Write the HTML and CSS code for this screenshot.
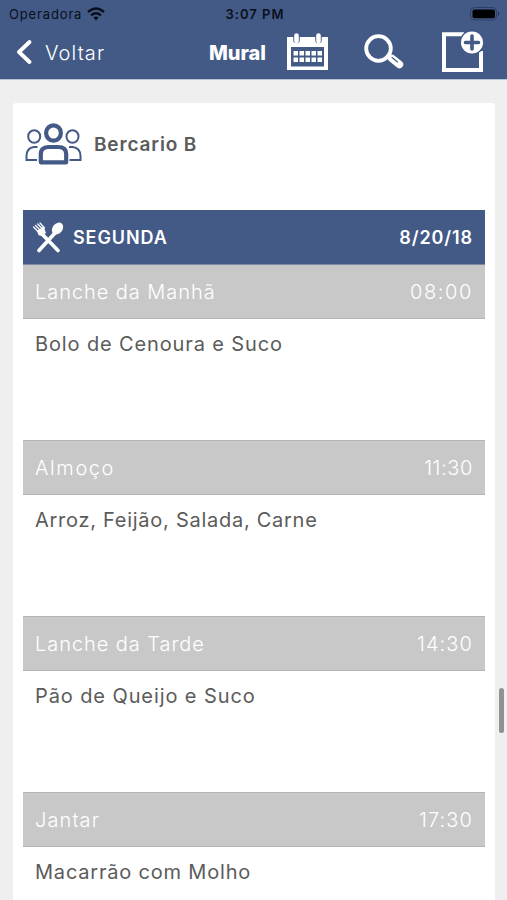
FILE: index.html
```html
<!DOCTYPE html>
<html lang="pt">
<head>
<meta charset="utf-8">
<meta name="viewport" content="width=device-width">
<title>Mural</title>
<link rel="stylesheet" href="styles.css">
</head>
<body>
<header class="top">
  <div class="status">
    <div class="carrier"><span class="operator">Operadora</span>
      <svg width="18" height="14" viewBox="0 0 18 14" fill="none" stroke="#0a0f1c" stroke-width="2.4"><path d="M1 5Q9-2 17 5M4 8.300Q9 4 14 8.300"/><path d="M6.300 10.600Q9 8.300 11.700 10.600L9 13.500Z" fill="#0a0f1c" stroke="none"/></svg>
    </div>
    <span class="clock">3:07 PM</span>
    <svg class="battery" width="31" height="14" viewBox="0 0 31 14"><rect x=".5" y=".5" width="26" height="12.500" rx="4" fill="none" stroke="#2c3e66"/><rect x="2.500" y="2.500" width="22.500" height="8.700" rx="2" fill="#000"/><path d="M28 4.500q2.500 2.200 0 4.500z" fill="#25365c"/></svg>
  </div>
  <nav class="bar">
    <div class="back">
      <svg width="16" height="24" viewBox="0 0 16 24" fill="none" stroke="#fff" stroke-width="3.800" stroke-linecap="round" stroke-linejoin="round"><path d="M13.500 2L3 12L13.500 22"/></svg>
      <span class="back-label">Voltar</span>
    </div>
    <h1 class="title">Mural</h1>
    <div class="actions">
      <svg width="42" height="38" viewBox="0 0 42 38"><path fill="#fff" fill-rule="evenodd" d="M0 4H41V37H0ZM4 14V33.500H37V14Z"/><path d="M9.500 2V7M31.500 2V7" stroke="#435a87" stroke-width="6.500" stroke-linecap="round"/><path d="M9.500 2.500V8M31.500 2.500V8" stroke="#fff" stroke-width="4.600" stroke-linecap="round"/><path fill="#fff" d="M6.500 18h4.500v4.500H6.500zM12.500 18H17v4.500H12.500zM18.500 18H23v4.500H18.500zM24.500 18H29v4.500H24.500zM30.500 18H35v4.500H30.500zM6.500 24.500h4.500V29H6.500zM12.500 24.500H17V29H12.500zM18.500 24.500H23V29H18.500zM24.500 24.500H29V29H24.500zM30.500 24.500H35V29H30.500z"/></svg>
      <svg class="search" width="41" height="36" viewBox="0 0 41 36" fill="none" stroke="#fff" stroke-linecap="round"><circle cx="14.500" cy="14.500" r="12.300" stroke-width="3.800"/><path d="M23.500 22.500L27 25" stroke-width="4"/><path d="M28 24.500L35.500 30.500" stroke-width="7.500"/><path d="M28 23.500L33.500 28" stroke="#435a87" stroke-width="1.100"/></svg>
      <svg class="add" width="42" height="42" viewBox="0 0 42 42"><path d="M22 3.200H2V39H39V20" fill="none" stroke="#fff" stroke-width="4"/><circle cx="30" cy="11.500" r="12.500" fill="#435a87"/><circle cx="30" cy="11.500" r="11" fill="#fff"/><path d="M30 5V18M23.500 11.500H36.500" stroke="#435a87" stroke-width="3.600" stroke-linecap="round"/></svg>
    </div>
  </nav>
</header>
<main class="card">
  <div class="group">
    <svg width="58" height="42" viewBox="0 0 58 42" fill="none" stroke="#435a87"><g stroke-width="2"><ellipse cx="9.200" cy="13.500" rx="6" ry="6.300"/><ellipse cx="47.500" cy="13.500" rx="6" ry="6.300"/><path d="M12.500 24H9Q1.500 25 1.500 33V37H12M44 24H47.500Q55.500 25 55.500 33V37H44.500"/></g><g stroke-width="4.200"><ellipse cx="28.500" cy="10" rx="7.400" ry="7.700"/><path d="M15.800 39.300V31Q15.800 24 24 24H33Q41.200 24 41.200 31V39.300Z" stroke-linejoin="round"/></g></svg>
    <span class="group-name">Bercario B</span>
  </div>
  <section class="menu">
    <div class="day">
      <svg width="32" height="32" viewBox="0 0 32 32" fill="none" stroke="#fff" stroke-linecap="round"><path d="M10 12L26 28.500M23 11L7 28.500" stroke-width="3.700"/><ellipse cx="25.500" cy="6.500" rx="4.900" ry="6.600" transform="rotate(40 25.500 6.500)" fill="#fff" stroke="none"/><path d="M1.500 5L6.500 10M3.500 3.500L8.500 8.500M5.700 2L10.500 7M8 1L12.500 6" stroke-width="1.250"/><path d="M5 9L11.500 4.500L14 11Q10 15 6.500 13Z" fill="#fff" stroke="none"/></svg>
      <span class="day-name">SEGUNDA</span><span class="date">8/20/18</span>
    </div>
    <div class="meal"><span class="m1">Lanche da Manhã</span><span class="t1">08:00</span></div>
    <p class="food f1">Bolo de Cenoura e Suco</p>
    <div class="meal"><span class="m2">Almoço</span><span class="t2">11:30</span></div>
    <p class="food f2">Arroz, Feijão, Salada, Carne</p>
    <div class="meal"><span class="m3">Lanche da Tarde</span><span class="t3">14:30</span></div>
    <p class="food f3">Pão de Queijo e Suco</p>
    <div class="meal"><span class="m4">Jantar</span><span class="t4">17:30</span></div>
    <p class="food f4">Macarrão com Molho</p>
  </section>
</main>
<div class="scroll-thumb"></div>
</body>
</html>
```
FILE: styles.css
```css
* { box-sizing: border-box; }
body { margin: 0; height: 900px; overflow: hidden; background: #efefef; font-family: Inter, "Liberation Sans", sans-serif; color: #5b5b5b; }
svg { display: block; flex: none; }
.top { height: 80px; background: #435a87; border-bottom: 1px solid #b5c3d8; }
.status { display: grid; grid-template-columns: 1fr auto 1fr; height: 27px; padding: 0 6px 0 9px; align-items: center; font-size: 13px; color: #0a0f1c; }
.carrier { display: flex; gap: 5px; align-items: center; }
.operator { letter-spacing: .85px; }
.clock { font-weight: 600; letter-spacing: 1px; }
.battery { justify-self: end; }
.bar { display: flex; height: 50px; align-items: center; color: #fff; }
.back { display: flex; align-items: center; gap: 13px; width: 193px; padding-left: 16px; }
.back-label { padding-top: 1px; font-size: 20px; font-weight: 300; letter-spacing: 1.1px; }
.title { width: 78px; margin: 0; padding: 1px 0 0 16px; font-size: 20px; font-weight: 800; white-space: nowrap; }
.actions { display: flex; align-items: center; margin-left: 16px; }
.search { margin-left: 35px; }
.add { margin-left: 37px; }
.card { width: 482px; height: 797px; margin: 23px 0 0 13px; padding: 0 10px; background: #fff; border-radius: 3px 3px 0 0; }
.group { display: flex; align-items: center; gap: 11px; height: 82px; padding-left: 2px; }
.group-name { font-size: 19px; font-weight: 600; letter-spacing: .85px; }
.menu { margin-top: 25px; }
.day { display: flex; align-items: center; height: 55px; padding: 1px 12px 0 9px; background: #435a87; color: #fff; font-size: 18px; font-weight: 600; letter-spacing: .9px; border-bottom: 1px solid #7c899e; }
.day-name { margin-left: 9px; }
.date { margin-left: auto; }
.meal { display: flex; align-items: center; justify-content: space-between; height: 55px; padding: 0 12px; background: #c8c8c8; border: solid #b1b5b8; border-width: 1px 0; color: #fff; font-size: 20px; font-weight: 300; }
.day + .meal { height: 54px; border-top: 0; }
.food { margin: 0; height: 121px; padding: 12px 12px 0; font-size: 20px; line-height: 26px; white-space: nowrap; }
.food:last-child { height: 53px; }
.m1, .m3 { letter-spacing: .95px; }
.m2 { letter-spacing: 1.6px; }
.m4 { letter-spacing: 1.1px; }
.t1 { letter-spacing: 1.6px; }
.t2 { letter-spacing: .6px; }
.t3, .t4 { letter-spacing: 1.1px; }
.f1 { letter-spacing: .87px; }
.f2 { letter-spacing: .73px; }
.f3 { letter-spacing: .9px; }
.f4 { letter-spacing: .8px; }
.scroll-thumb { position: fixed; top: 688px; right: 3px; width: 5px; height: 45px; border-radius: 3px; background: #929292; }
```
